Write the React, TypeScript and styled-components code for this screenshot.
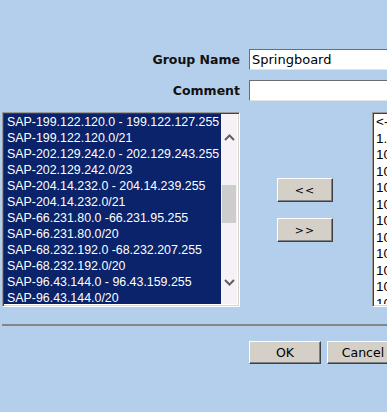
import styled, { createGlobalStyle } from "styled-components";

const GlobalStyle = createGlobalStyle`
  html, body {
    margin: 0;
    padding: 0;
    overflow: hidden;
    background: #b4cfec;
  }
`;

const leftItems = [
  "SAP-199.122.120.0 - 199.122.127.255",
  "SAP-199.122.120.0/21",
  "SAP-202.129.242.0 - 202.129.243.255",
  "SAP-202.129.242.0/23",
  "SAP-204.14.232.0 - 204.14.239.255",
  "SAP-204.14.232.0/21",
  "SAP-66.231.80.0 -66.231.95.255",
  "SAP-66.231.80.0/20",
  "SAP-68.232.192.0 -68.232.207.255",
  "SAP-68.232.192.0/20",
  "SAP-96.43.144.0 - 96.43.159.255",
  "SAP-96.43.144.0/20",
];

// the window edge cuts this list, only the first characters show
const rightItems = [
  "<-- None -->",
  "1.1.1.1",
  "10.0.0.0/8",
  "10.1.0.0/16",
  "10.10.0.0/16",
  "10.100.0.0/16",
  "10.101.0.0/16",
  "10.102.0.0/16",
  "10.103.0.0/16",
  "10.104.0.0/16",
  "10.105.0.0/16",
  "10.106.0.0/16",
];

const Chevron = ({ up }: { up?: boolean }) => (
  <svg width="11" height="7" viewBox="0 0 11 7">
    <path
      d={up ? "M1 6 L5.5 1.5 L10 6" : "M1 1 L5.5 5.5 L10 1"}
      fill="none"
      stroke="#606060"
      strokeWidth="2"
    />
  </svg>
);

const App = () => {
  return (
    <Page>
      <GlobalStyle />
      <FieldRow>
        <Label>Group Name</Label>
        <TextInput defaultValue="Springboard" />
      </FieldRow>
      <FieldRow $gap={10}>
        <Label>Comment</Label>
        <TextInput defaultValue="" />
      </FieldRow>

      <ListsRow>
        <ListBox $width={238}>
          <Items>
            {leftItems.map((item) => (
              <SelectedItem key={item}>{item}</SelectedItem>
            ))}
          </Items>
          <Scrollbar>
            <Arrow $top={20}>
              <Chevron up />
            </Arrow>
            <Thumb />
            <Arrow $top={56}>
              <Chevron />
            </Arrow>
          </Scrollbar>
        </ListBox>

        <MoveButtons>
          <SmallButton>&lt;&lt;</SmallButton>
          <SmallButton>&gt;&gt;</SmallButton>
        </MoveButtons>

        <ListBox $width={160}>
          <Items>
            {rightItems.map((item) => (
              <PlainItem key={item}>{item}</PlainItem>
            ))}
          </Items>
        </ListBox>
      </ListsRow>

      <Divider />

      <Actions>
        <ActionButton>OK</ActionButton>
        <ActionButton>Cancel</ActionButton>
      </Actions>
    </Page>
  );
};

const Page = styled.div`
  width: 387px;
  height: 412px;
  padding-top: 49px;
  box-sizing: border-box;
  background: #b4cfec;
  font-family: "DejaVu Sans", Verdana, sans-serif;
  overflow: hidden;
`;

const FieldRow = styled.div<{ $gap?: number }>`
  display: flex;
  align-items: center;
  margin-top: ${(p) => p.$gap ?? 0}px;
  white-space: nowrap;
`;

const Label = styled.label`
  width: 240px;
  margin-right: 9px;
  flex-shrink: 0;
  text-align: right;
  font-weight: bold;
  font-size: 12.5px;
  color: #111;
`;

const TextInput = styled.input`
  flex-shrink: 0;
  width: 180px;
  height: 21px;
  box-sizing: border-box;
  padding: 0 2px;
  margin: 0;
  border: 1px solid;
  border-color: #6d6d6d #e4e4e4 #e4e4e4 #6d6d6d;
  background: #fff;
  font-family: "DejaVu Sans", Verdana, sans-serif;
  font-size: 13px;
  color: #000;
  outline: none;
`;

const ListsRow = styled.div`
  display: flex;
  align-items: flex-start;
  margin-top: 11px;
  padding-left: 2px;
  white-space: nowrap;
`;

const ListBox = styled.div<{ $width: number }>`
  display: flex;
  flex-shrink: 0;
  width: ${(p) => p.$width}px;
  height: 195px;
  box-sizing: border-box;
  border: 1px solid;
  border-color: #9a9a9a #ffffff #ffffff #9a9a9a;
  box-shadow: inset 1px 1px 0 #404040, inset -1px -1px 0 #d8d4d0;
  padding: 1px 2px 2px 1px;
  background: #fff;
  overflow: hidden;
`;

const Items = styled.div`
  flex: 1;
  min-width: 0;
  display: flex;
  flex-direction: column;
  overflow: hidden;
`;

const SelectedItem = styled.div`
  height: 16px;
  line-height: 16px;
  padding-left: 3px;
  background: #0a236a;
  color: #fff;
  font-family: "Liberation Sans", Arial, sans-serif;
  font-size: 12.4px;
`;

const PlainItem = styled.div`
  height: 16.5px;
  line-height: 16.5px;
  padding-left: 2px;
  color: #000;
  font-family: "Liberation Sans", Arial, sans-serif;
  font-size: 13.5px;
`;

const Scrollbar = styled.div`
  width: 16px;
  flex-shrink: 0;
  display: flex;
  flex-direction: column;
  align-items: center;
  background: #f6f1f6;
`;

const Arrow = styled.div<{ $top: number }>`
  display: flex;
  margin-top: ${(p) => p.$top}px;
  height: 7px;
`;

const Thumb = styled.div`
  width: 14px;
  height: 38px;
  margin-top: 44px;
  background: #cdcdcd;
`;

const MoveButtons = styled.div`
  display: flex;
  flex-direction: column;
  gap: 16px;
  margin: 66px 39px 0 37px;
`;

const ButtonBase = styled.button`
  box-sizing: border-box;
  margin: 0;
  padding: 0;
  background: #d4d0c8;
  border: 1px solid;
  border-color: #ffffff #404040 #404040 #ffffff;
  box-shadow: inset -1px -1px 0 #808080;
  color: #000;
  font-family: "DejaVu Sans", Verdana, sans-serif;
  cursor: pointer;
`;

const SmallButton = styled(ButtonBase)`
  width: 56px;
  height: 24px;
  font-size: 11px;
  letter-spacing: 1px;
`;

const Divider = styled.div`
  height: 2px;
  margin: 17px 0 0 2px;
  background: #858585;
`;

const Actions = styled.div`
  display: flex;
  gap: 6px;
  margin-top: 15px;
  padding-left: 249px;
  white-space: nowrap;
`;

const ActionButton = styled(ButtonBase)`
  flex-shrink: 0;
  width: 72px;
  height: 23px;
  font-size: 12.5px;
`;

export default App;
